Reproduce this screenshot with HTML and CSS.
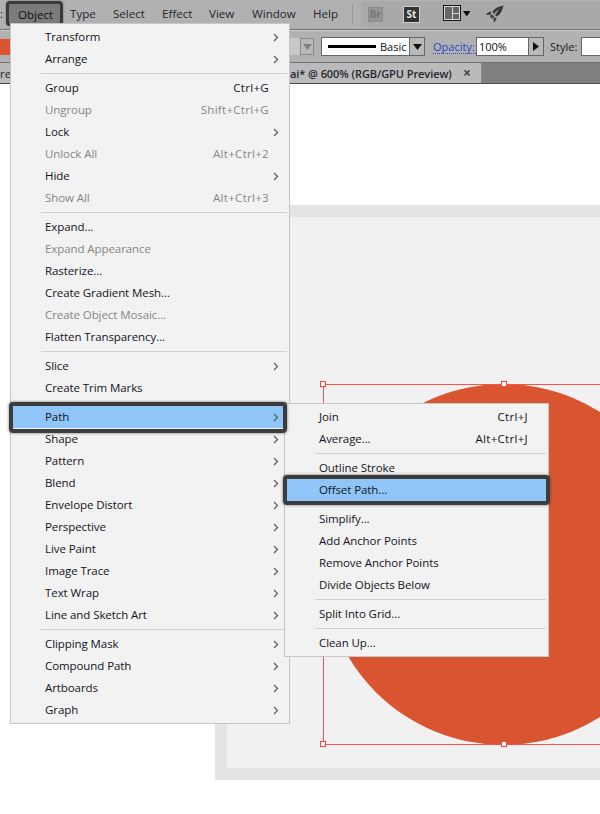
FILE: index.html
```html
<!DOCTYPE html>
<html lang="en">
<head>
<meta charset="utf-8">
<title>Object menu</title>
<link rel="stylesheet" href="styles.css">
</head>
<body>
<div class="app">
  <header class="menubar">
    <nav class="menus">
      <span class="top top-grip">:</span>
      <span class="top top-object">Object</span>
      <span class="top top-type">Type</span>
      <span class="top top-select">Select</span>
      <span class="top top-effect">Effect</span>
      <span class="top top-view">View</span>
      <span class="top top-window">Window</span>
      <span class="top top-help">Help</span>
    </nav>
    <div class="divider"></div>
    <div class="apps">
      <span class="badge badge-br">Br</span>
      <span class="badge badge-st">St</span>
      <svg class="layout-icon" width="28" height="16" viewBox="0 0 28 16"><rect x="0.5" y="0.5" width="17" height="15" fill="#666" stroke="#161616"/><rect x="1.5" y="1.5" width="15" height="13" fill="none" stroke="#d8d8d8"/><path d="M9.5 1.5V14.5M9.5 8.5H16.5" stroke="#d8d8d8" fill="none"/><path d="M20 6H27.5L23.75 11.5Z" fill="#0c0c0c"/></svg>
      <svg class="rocket-icon" width="18" height="18" viewBox="0 0 18 18"><path d="M17.5 0.5C12 1.5 8.5 3.5 6.5 6.5L8.3 9.5C8.8 7.5 10.5 5.5 12.5 4.5C11.5 6.5 10.5 8.5 9 10.5L11 11.5C14.5 9 16.5 5.5 17.5 0.5Z" fill="#383838"/><path d="M5.5 6.5C3 6.8 1.2 7.8 0 10L5 9.5L4.6 8.2Z" fill="#383838"/><path d="M10.5 12.5C10.5 14.5 9.5 16.3 7.5 17.5L7.8 13Z" fill="#383838"/><path d="M5.5 9L8.5 12L6.5 14L3.8 11.5Z" fill="#454545"/></svg>
    </div>
  </header>
  <section class="controlbar">
    <div class="swatch"></div>
    <div class="spacer"></div>
    <div class="mini-field"></div>
    <div class="mini-drop"><svg width="9" height="6" viewBox="0 0 9 6"><path d="M0 0H9L4.5 6Z" fill="#808080"/></svg></div>
    <div class="stroke-box">
      <span class="stroke-line"></span>
      <span class="stroke-name">Basic</span>
      <span class="stroke-drop"><svg width="9" height="6" viewBox="0 0 9 6"><path d="M0 0H9L4.5 6Z" fill="#111"/></svg></span>
    </div>
    <span class="opacity-label">Opacity:</span>
    <div class="opacity-box">
      <span class="opacity-value">100%</span>
      <span class="opacity-arrow"><svg width="6" height="9" viewBox="0 0 6 9"><path d="M0 0V9L6 4.5Z" fill="#111"/></svg></span>
    </div>
    <span class="style-label">Style:</span>
    <div class="style-box"></div>
  </section>
  <section class="tabbar">
    <div class="tab">
      <span class="tab-head">rea</span>
      <span class="tab-title">ai* @ 600% (RGB/GPU Preview)</span>
      <span class="tab-close">×</span>
    </div>
    <div class="tab-rest"></div>
  </section>
  <main class="canvas">
    <div class="artboard">
      <div class="selection">
        <div class="circle"></div>
        <span class="handle handle-tl"></span>
        <span class="handle handle-tc"></span>
        <span class="handle handle-bl"></span>
        <span class="handle handle-bc"></span>
      </div>
    </div>
  </main>

  <div class="menu menu-object">
    <div class="item sub"><span class="label">Transform</span><svg class="chev" viewBox="0 0 6 9"><path d="M1 1L4.5 4.5L1 8"/></svg></div>
    <div class="item sub"><span class="label">Arrange</span><svg class="chev" viewBox="0 0 6 9"><path d="M1 1L4.5 4.5L1 8"/></svg></div>
    <div class="sep"></div>
    <div class="item"><span class="label">Group</span><span class="key">Ctrl+G</span></div>
    <div class="item off"><span class="label">Ungroup</span><span class="key">Shift+Ctrl+G</span></div>
    <div class="item sub"><span class="label">Lock</span><svg class="chev" viewBox="0 0 6 9"><path d="M1 1L4.5 4.5L1 8"/></svg></div>
    <div class="item off"><span class="label">Unlock All</span><span class="key">Alt+Ctrl+2</span></div>
    <div class="item sub"><span class="label">Hide</span><svg class="chev" viewBox="0 0 6 9"><path d="M1 1L4.5 4.5L1 8"/></svg></div>
    <div class="item off"><span class="label">Show All</span><span class="key">Alt+Ctrl+3</span></div>
    <div class="sep"></div>
    <div class="item"><span class="label">Expand...</span></div>
    <div class="item off"><span class="label">Expand Appearance</span></div>
    <div class="item"><span class="label">Rasterize...</span></div>
    <div class="item"><span class="label">Create Gradient Mesh...</span></div>
    <div class="item off"><span class="label">Create Object Mosaic...</span></div>
    <div class="item"><span class="label">Flatten Transparency...</span></div>
    <div class="sep"></div>
    <div class="item sub"><span class="label">Slice</span><svg class="chev" viewBox="0 0 6 9"><path d="M1 1L4.5 4.5L1 8"/></svg></div>
    <div class="item"><span class="label">Create Trim Marks</span></div>
    <div class="sep"></div>
    <div class="item sub hot hot-path"><span class="label">Path</span><svg class="chev" viewBox="0 0 6 9"><path d="M1 1L4.5 4.5L1 8"/></svg></div>
    <div class="item sub"><span class="label">Shape</span><svg class="chev" viewBox="0 0 6 9"><path d="M1 1L4.5 4.5L1 8"/></svg></div>
    <div class="item sub"><span class="label">Pattern</span><svg class="chev" viewBox="0 0 6 9"><path d="M1 1L4.5 4.5L1 8"/></svg></div>
    <div class="item sub"><span class="label">Blend</span><svg class="chev" viewBox="0 0 6 9"><path d="M1 1L4.5 4.5L1 8"/></svg></div>
    <div class="item sub"><span class="label">Envelope Distort</span><svg class="chev" viewBox="0 0 6 9"><path d="M1 1L4.5 4.5L1 8"/></svg></div>
    <div class="item sub"><span class="label">Perspective</span><svg class="chev" viewBox="0 0 6 9"><path d="M1 1L4.5 4.5L1 8"/></svg></div>
    <div class="item sub"><span class="label">Live Paint</span><svg class="chev" viewBox="0 0 6 9"><path d="M1 1L4.5 4.5L1 8"/></svg></div>
    <div class="item sub"><span class="label">Image Trace</span><svg class="chev" viewBox="0 0 6 9"><path d="M1 1L4.5 4.5L1 8"/></svg></div>
    <div class="item sub"><span class="label">Text Wrap</span><svg class="chev" viewBox="0 0 6 9"><path d="M1 1L4.5 4.5L1 8"/></svg></div>
    <div class="item sub"><span class="label">Line and Sketch Art</span><svg class="chev" viewBox="0 0 6 9"><path d="M1 1L4.5 4.5L1 8"/></svg></div>
    <div class="sep"></div>
    <div class="item sub"><span class="label">Clipping Mask</span><svg class="chev" viewBox="0 0 6 9"><path d="M1 1L4.5 4.5L1 8"/></svg></div>
    <div class="item sub"><span class="label">Compound Path</span><svg class="chev" viewBox="0 0 6 9"><path d="M1 1L4.5 4.5L1 8"/></svg></div>
    <div class="item sub"><span class="label">Artboards</span><svg class="chev" viewBox="0 0 6 9"><path d="M1 1L4.5 4.5L1 8"/></svg></div>
    <div class="item sub"><span class="label">Graph</span><svg class="chev" viewBox="0 0 6 9"><path d="M1 1L4.5 4.5L1 8"/></svg></div>
  </div>

  <div class="menu menu-path">
    <div class="item"><span class="label">Join</span><span class="key">Ctrl+J</span></div>
    <div class="item"><span class="label">Average...</span><span class="key">Alt+Ctrl+J</span></div>
    <div class="sep"></div>
    <div class="item"><span class="label">Outline Stroke</span></div>
    <div class="item hot hot-offset"><span class="label">Offset Path...</span></div>
    <div class="sep"></div>
    <div class="item"><span class="label">Simplify...</span></div>
    <div class="item"><span class="label">Add Anchor Points</span></div>
    <div class="item"><span class="label">Remove Anchor Points</span></div>
    <div class="item"><span class="label">Divide Objects Below</span></div>
    <div class="sep"></div>
    <div class="item"><span class="label">Split Into Grid...</span></div>
    <div class="sep"></div>
    <div class="item"><span class="label">Clean Up...</span></div>
  </div>
</div>
</body>
</html>
```
FILE: styles.css
```css
* { box-sizing: border-box; }
html, body { margin: 0; padding: 0; }
body {
  width: 600px;
  height: 814px;
  overflow: hidden;
  background: #fff;
  font-family: "Open Sans", "Noto Sans", sans-serif;
  font-size: 11.5px;
  color: #14141c;
}
.app { position: relative; width: 600px; height: 814px; overflow: hidden; display: flex; flex-direction: column; }

/* menu bar */
.menubar {
  height: 30px;
  flex: none;
  display: flex;
  align-items: stretch;
  background: #b1b1b1;
  border-bottom: 1px solid #6f6f6f;
}
.menus { position: relative; width: 352px; flex: none; font-size: 11.6px; }
.top { position: absolute; top: 0; line-height: 28px; color: #26262e; }
.top-grip { left: 0; }
.top-object {
  left: 6px; top: 1px; width: 57px; height: 25px; line-height: 21px; padding-left: 9px;
  background: #7b7b7b; color: #111;
  border: 3px solid #3a3a3a; border-radius: 4px;
  box-shadow: 0 0 2px rgba(40,40,40,.6);
}
.top-type { left: 70px; }
.top-select { left: 113px; }
.top-effect { left: 162px; }
.top-view { left: 209px; }
.top-window { left: 252px; }
.top-help { left: 313px; }
.divider { width: 1px; margin: 4px 0; background: #9a9a9a; flex: none; }
.apps {
  margin: 1px 0 2px 8px;
  flex: 1;
  background: #a9a9a9;
  display: flex;
  align-items: center;
  padding-left: 7px;
}
.badge {
  width: 15px; height: 15px; font-size: 10px; font-weight: 700; line-height: 15px; text-align: center;
}
.badge-br { background: #959595; color: #777; border: 1px solid #8a8a8a; line-height: 13px; }
.badge-st { background: #333; color: #e8e8e8; margin-left: 21px; box-shadow: 0 0 0 1px #cfcfcf; }
.layout-icon { margin-left: 24px; margin-top: -2px; }
.rocket-icon { margin-left: 15px; }

/* control bar */
.controlbar {
  height: 33px;
  flex: none;
  display: flex;
  align-items: center;
  background: #b1b1b1;
  border-bottom: 1px solid #6f6f6f;
  border-top: 1px solid #cfcfcf;
  font-size: 11.5px;
}
.swatch { width: 10px; height: 16px; background: #d9552f; flex: none; }
.spacer { flex: none; width: 280px; }
.mini-field { width: 10px; height: 17px; background: #c8c8c8; flex: none; }
.mini-drop {
  width: 14px; height: 17px; border: 1px solid #8a8a8a; background: #b9b9b9; flex: none;
  display: flex; align-items: center; justify-content: center;
}
.stroke-box {
  margin-left: 7px; width: 104px; height: 19px; flex: none;
  background: #fff; border: 1px solid #666;
  display: flex; align-items: center;
}
.stroke-line { width: 48px; height: 3px; background: #000; margin-left: 6px; flex: none; }
.stroke-name { margin-left: 4px; font-size: 11px; flex: 1; color: #111; }
.stroke-drop {
  width: 15px; height: 100%; background: #b9b9b9; border-left: 1px solid #666; flex: none;
  display: flex; align-items: center; justify-content: center;
}
.opacity-label { margin-left: 8px; width: 43px; color: #2a48c8; border-bottom: 1px dotted #2a48c8; line-height: 13px; flex: none; font-size: 11px; }
.opacity-box {
  width: 68px; height: 19px; flex: none;
  background: #fff; border: 1px solid #666;
  display: flex; align-items: center;
}
.opacity-value { flex: 1; padding-left: 2px; font-size: 11px; color: #111; }
.opacity-arrow {
  width: 15px; height: 100%; background: #b9b9b9; border-left: 1px solid #666; flex: none;
  display: flex; align-items: center; justify-content: center;
}
.style-label { margin-left: 6px; width: 31px; flex: none; font-size: 11px; color: #222; }
.style-box { width: 19px; height: 19px; background: #fff; border: 1px solid #666; border-right: 0; flex: none; }

/* tabs */
.tabbar {
  height: 21px;
  flex: none;
  display: flex;
  border-bottom: 1px solid #4e4e4e;
}
.tab {
  width: 482px; flex: none; background: #bababa; border-right: 1px solid #8c8c8c;
  display: flex; align-items: center; font-size: 11.5px; color: #26262e;
}
.tab-head { width: 290px; flex: none; }
.tab-title { flex: 1; font-weight: 600; font-size: 11px; letter-spacing: -0.07px; }
.tab-close { width: 22px; flex: none; font-size: 14px; font-weight: 700; color: #444; text-align: left; padding-left: 4px; line-height: 14px; }
.tab-rest { flex: 1; background: #7f7f7f; }

/* canvas */
.canvas { flex: 1; background: #fff; padding: 121px 0 0 215px; overflow: hidden; }
.artboard {
  position: relative;
  width: 500px; height: 575px;
  background: #f1f1f1;
  border: 12px solid #e4e4e4;
  border-right: 0;
}
.selection {
  position: absolute; left: 96px; top: 167px;
  width: 361px; height: 361px;
}
.circle { position: absolute; inset: 0; border-radius: 50%; background: #d9552f; }
.selection::after {
  content: "";
  position: absolute; inset: 0;
  border: 1px solid #ff5050;
}
.handle {
  position: absolute; z-index: 1; width: 6px; height: 6px; background: #fff; border: 1px solid #ff4040;
}
.handle-tl { left: -3px; top: -3px; }
.handle-tc { left: 178px; top: -3px; }
.handle-bl { left: -3px; top: 357px; }
.handle-bc { left: 178px; top: 357px; }

/* menus */
.menu {
  position: absolute;
  padding: 2px 0;
  background: #f2f2f2;
  border: 1px solid #c6c6c6;
}
.menu-object { left: 10px; top: 23px; width: 280px; height: 701px; }
.menu-path { left: 284px; top: 403px; width: 265px; height: 254px; }
.item {
  position: relative;
  height: 22px;
  display: flex;
  align-items: center;
  line-height: 22px;
  padding: 0 20px 0 34px;
}
.label { flex: 1; white-space: nowrap; letter-spacing: -0.08px; }
.key { white-space: nowrap; letter-spacing: 0.3px; }
.off { color: #868686; }
.chev {
  position: absolute; right: 10px; top: 7px; width: 6px; height: 9px;
  fill: none; stroke: #5a5a5a; stroke-width: 1.2;
}
.sep { height: 1px; margin: 3px 2px 3px 30px; background: #d0d0d0; }
.hot { background: #8fc6f7; z-index: 2; }
.hot::before {
  content: "";
  position: absolute;
  border: 4px solid #3c3c3c;
  border-radius: 4px;
  box-shadow: 0 0 3px rgba(50,50,50,.7);
}
.hot-path { margin: 0 6px 0 2px; padding-left: 32px; padding-right: 14px; }
.hot-path .chev { right: 4px; }
.hot-path::before { left: -4px; right: -4px; top: -4px; bottom: -5px; }
.hot-offset { margin: 0 2px; padding-left: 32px; }
.hot-offset::before { left: -4px; right: -4px; top: -4px; bottom: -4px; }
```
